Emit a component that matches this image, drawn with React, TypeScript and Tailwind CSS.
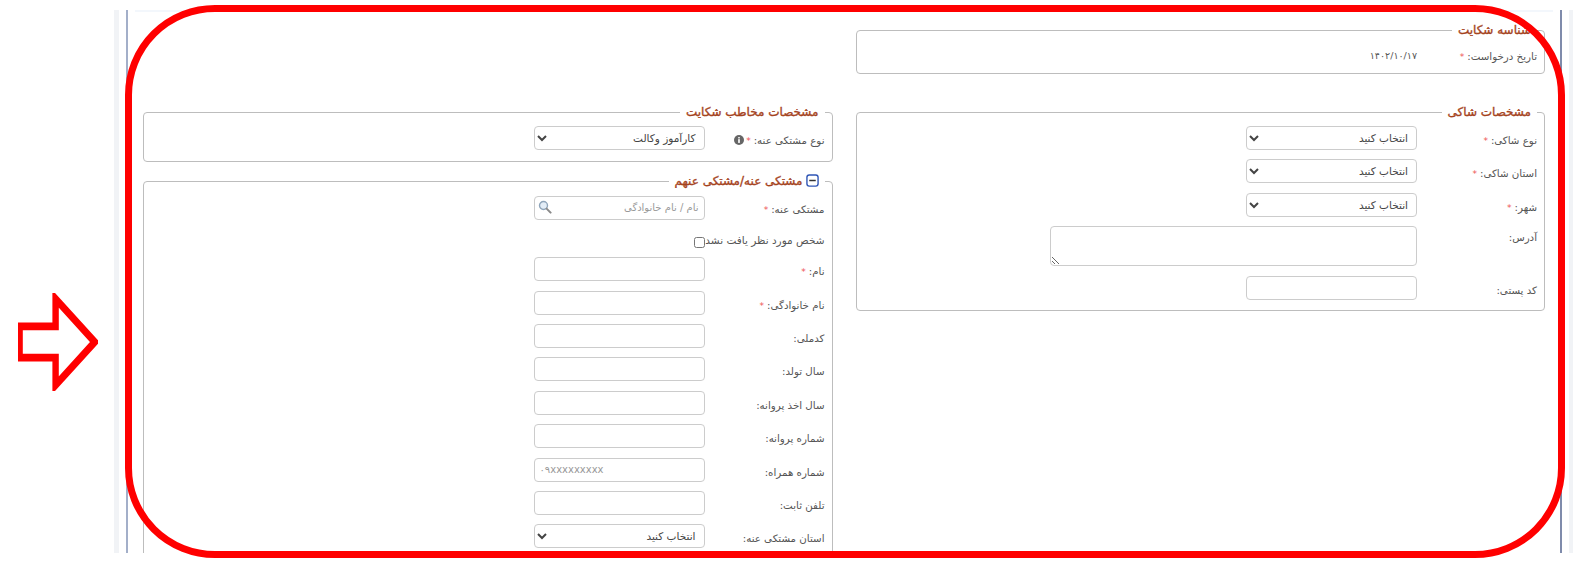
import { ReactNode } from 'react'

const inputClass = 'h-[24px] w-[171px] rounded-[4px] border border-[#cccccc] bg-white px-[5px] text-[10px] text-[#555] outline-none placeholder:text-[#999]'
const selectClass = 'h-[24px] w-[171px] rounded-[4px] border border-[#cccccc] bg-white px-[4px] text-[10.5px] text-[#444]'

function Req() {
  return <span className="mr-[3px] text-[9px] text-[#ee5555]">*</span>
}

function Row({ label, required, extra, labelClass = 'pt-[6px]', children }: { label: string; required?: boolean; extra?: ReactNode; labelClass?: string; children: ReactNode }) {
  return (
    <div className="flex items-start">
      <label className={`w-[120px] shrink-0 text-[10.25px] leading-[16px] text-[#555] ${labelClass}`}>
        {label}
        {required && <Req />}
        {extra}
      </label>
      {children}
    </div>
  )
}

function Box({ title, className, children }: { title: ReactNode; className?: string; children: ReactNode }) {
  return (
    <fieldset className={`rounded-[4px] border border-[#bdbdbd] px-[7px] ${className ?? ''}`}>
      <legend className="mr-0 px-[6px] text-[12px] leading-[18px] text-[#a5431d] [-webkit-text-stroke:0.35px_#a5431d]">{title}</legend>
      {children}
    </fieldset>
  )
}

function Picker({ value = 'انتخاب کنید' }: { value?: string }) {
  return (
    <select className={selectClass} defaultValue={value}>
      <option>{value}</option>
    </select>
  )
}

function InfoIcon() {
  return (
    <svg viewBox="0 0 12 12" className="mr-[2px] inline-block h-[10px] w-[10px] align-[-1px]">
      <circle cx="6" cy="6" r="6" fill="#666" />
      <rect x="5" y="5" width="2" height="4.5" fill="#fff" />
      <rect x="5" y="2.5" width="2" height="1.6" fill="#fff" />
    </svg>
  )
}

function MinusIcon() {
  return (
    <svg viewBox="0 0 14 14" className="ml-[3px] inline-block h-[13px] w-[13px] align-[-2px]">
      <rect x="1" y="1" width="12" height="12" rx="2.5" fill="#fff" stroke="#2f55b5" strokeWidth="1.5" />
      <rect x="3.5" y="6.2" width="7" height="1.6" fill="#333" />
    </svg>
  )
}

function LensIcon() {
  return (
    <svg viewBox="0 0 14 14" className="absolute left-[4px] top-[6px] h-[14px] w-[14px]">
      <circle cx="5.5" cy="5.5" r="4" fill="#e3edf7" stroke="#8fa5ba" strokeWidth="1.4" />
      <path d="M8.6 8.6 L12.6 12.6" stroke="#8a8a8a" strokeWidth="2" strokeLinecap="round" />
    </svg>
  )
}

export default function App() {
  return (
    <div className="relative h-[564px] w-[1573px] overflow-hidden bg-white pt-[10px] pb-[11px] font-['DejaVu_Sans',sans-serif]">
      <div className="flex h-full">
        <div className="ml-[114px] w-[5px] bg-[#f1f3f6]" />
        <div className="ml-[7px] w-[2px] bg-[#a3afc9]" />
        <div dir="rtl" className="flex flex-1 flex-col overflow-hidden">
          <div className="mx-[7px] h-[2px] shrink-0 bg-[#f3f7fc]" />
          <div className="px-[15px] pt-[9px]">
            <div className="grid grid-cols-2 gap-x-[23px]">
              <Box title="شناسه شکایت" className="h-[53px]">
                <div className="flex items-start pt-[9px]">
                  <span className="w-[120px] text-[10.25px] leading-[16px] text-[#555]">
                    تاریخ درخواست:
                    <Req />
                  </span>
                  <span className="text-[9.5px] leading-[16px] text-[#555]">۱۴۰۲/۱۰/۱۷</span>
                </div>
              </Box>
              <div />
            </div>
            <div className="mt-[29px] grid grid-cols-2 gap-x-[23px]">
              <Box title="مشخصات شاکی" className="flex h-[208px] flex-col self-start">
                <div className="flex flex-col gap-[9.4px] pt-[5px]">
                  <Row label="نوع شاکی:" required>
                    <Picker />
                  </Row>
                  <Row label="استان شاکی:" required>
                    <Picker />
                  </Row>
                  <Row label="شهر:" required>
                    <Picker />
                  </Row>
                  <Row label="آدرس:" labelClass="pt-[3px]">
                    <textarea className="h-[40px] w-[367px] rounded-[4px] border border-[#cccccc] bg-white" />
                  </Row>
                  <Row label="کد پستی:">
                    <input className={inputClass} />
                  </Row>
                </div>
              </Box>
              <div className="flex flex-col gap-[10px]">
                <Box title="مشخصات مخاطب شکایت" className="h-[59px]">
                  <div className="pt-[5px]">
                    <Row label="نوع مشتکی عنه:" required extra={<InfoIcon />}>
                      <Picker value="کارآموز وکالت" />
                    </Row>
                  </div>
                </Box>
                <Box
                  title={
                    <>
                      <MinusIcon />
                      مشتکی عنه/مشتکی عنهم
                    </>
                  }
                >
                  <div className="flex flex-col gap-[9.4px] pt-[4px] pb-[20px]">
                    <Row label="مشتکی عنه:" required labelClass="pt-[7px]">
                      <div className="relative">
                        <input className={inputClass} placeholder="نام / نام خانوادگی" />
                        <LensIcon />
                      </div>
                    </Row>
                    <div className="flex h-[19px] items-end">
                      <span className="w-[120px] whitespace-nowrap text-[10.5px] leading-[16px] text-[#555]">شخص مورد نظر یافت نشد:</span>
                      <input type="checkbox" className="h-[11px] w-[11px]" />
                    </div>
                    <Row label="نام:" required>
                      <input className={inputClass} />
                    </Row>
                    <Row label="نام خانوادگی:" required>
                      <input className={inputClass} />
                    </Row>
                    <Row label="کدملی:">
                      <input className={inputClass} />
                    </Row>
                    <Row label="سال تولد:">
                      <input className={inputClass} />
                    </Row>
                    <Row label="سال اخذ پروانه:">
                      <input className={inputClass} />
                    </Row>
                    <Row label="شماره پروانه:">
                      <input className={inputClass} />
                    </Row>
                    <Row label="شماره همراه:">
                      <input dir="ltr" className={inputClass} placeholder="۰۹xxxxxxxxx" />
                    </Row>
                    <Row label="تلفن ثابت:">
                      <input className={inputClass} />
                    </Row>
                    <Row label="استان مشتکی عنه:">
                      <Picker />
                    </Row>
                  </div>
                </Box>
              </div>
            </div>
          </div>
        </div>
        <div className="w-[2px] shrink-0 bg-[#7f8bab]" />
        <div className="w-[7px] shrink-0" />
        <div className="w-[4px] shrink-0 bg-[#f1f3f6]" />
      </div>

      {/* red annotation drawn on top of the form */}
      <div className="pointer-events-none absolute left-[125px] top-[5px] h-[553px] w-[1440px] rounded-[90px] border-[7px] border-[#ff0000]" />
      <svg viewBox="0 0 100 100" className="absolute left-[18px] top-[293px] h-[98px] w-[80px]" preserveAspectRatio="none">
        <polygon points="2,34 47,34 47,6 96,50 47,94 47,66 2,66" fill="none" stroke="#ff0000" strokeWidth="8" />
      </svg>
    </div>
  )
}
